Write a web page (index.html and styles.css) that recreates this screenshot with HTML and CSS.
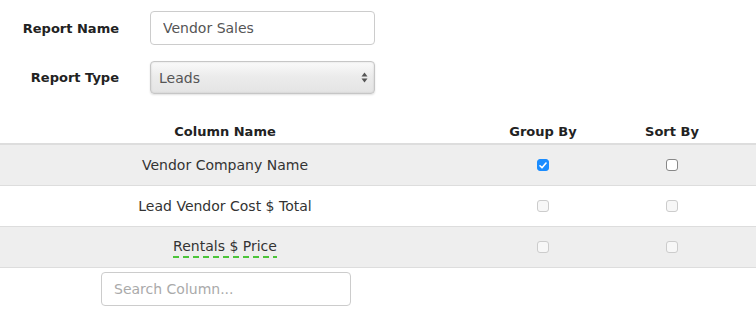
FILE: index.html
```html
<!DOCTYPE html>
<html>
<head>
<meta charset="utf-8">
<link rel="stylesheet" href="styles.css">
</head>
<body>
<div class="form">
  <div class="field">
    <label class="label">Report Name</label>
    <input class="text-input" type="text" value="Vendor Sales">
  </div>
  <div class="field">
    <label class="label">Report Type</label>
    <div class="select">
      <span>Leads</span>
      <svg class="arrows" width="7" height="11" viewBox="0 0 7 11"><path d="M3.5 0.5 L6.5 4.5 H0.5 Z M3.5 10.5 L6.5 6.5 H0.5 Z" fill="#555"/></svg>
    </div>
  </div>
</div>
<div class="table">
  <div class="row head">
    <div class="cell">Column Name</div>
    <div class="cell">Group By</div>
    <div class="cell">Sort By</div>
    <div class="cell"></div>
  </div>
  <div class="row alt">
    <div class="cell">Vendor Company Name</div>
    <div class="cell"><span class="cb checked"><svg width="8" height="7" viewBox="0 0 8 7"><path d="M1 3.8 L3 5.8 L7 1" fill="none" stroke="#fff" stroke-width="1.6" stroke-linecap="round" stroke-linejoin="round"/></svg></span></div>
    <div class="cell"><span class="cb"></span></div>
    <div class="cell"></div>
  </div>
  <div class="row">
    <div class="cell">Lead Vendor Cost $ Total</div>
    <div class="cell"><span class="cb disabled"></span></div>
    <div class="cell"><span class="cb disabled"></span></div>
    <div class="cell"></div>
  </div>
  <div class="row alt">
    <div class="cell"><span class="dashed">Rentals $ Price</span></div>
    <div class="cell"><span class="cb disabled"></span></div>
    <div class="cell"><span class="cb disabled"></span></div>
    <div class="cell"></div>
  </div>
</div>
<div class="search-wrap">
  <input class="search" type="text" placeholder="Search Column...">
</div>
</body>
</html>
```
FILE: styles.css
```css
html, body {
  margin: 0;
  padding: 0;
  background: #fff;
}
body {
  font-family: "DejaVu Sans", sans-serif;
  font-size: 14px;
  color: #333;
  width: 756px;
  height: 326px;
  overflow: hidden;
}
.form {
  padding-top: 11px;
  display: flex;
  flex-direction: column;
  gap: 16px;
}
.field {
  display: flex;
  align-items: center;
}
.label {
  width: 119px;
  text-align: right;
  font-weight: bold;
  font-size: 13px;
  color: #222;
  margin-right: 31px;
}
.text-input {
  box-sizing: border-box;
  width: 225px;
  height: 34px;
  border: 1px solid #ccc;
  border-radius: 4px;
  padding: 0 12px;
  font-family: inherit;
  font-size: 14px;
  color: #555;
  outline: none;
  margin: 0;
}
.select {
  box-sizing: border-box;
  width: 225px;
  height: 33px;
  border: 1px solid #c6c6c6;
  border-radius: 4px;
  padding: 0 6px 0 8px;
  display: flex;
  align-items: center;
  justify-content: space-between;
  background: linear-gradient(#fafafa, #ececec 45%, #e4e4e4);
  box-shadow: inset 0 0 2px rgba(0,0,0,0.15), 0 1px 2px rgba(0,0,0,0.12);
  color: #555;
}
.table {
  margin-top: 23px;
}
.row {
  display: grid;
  grid-template-columns: 450px 186px 72px 1fr;
  height: 40px;
  align-items: center;
  border-bottom: 1px solid #ddd;
}
.row.head {
  box-sizing: border-box;
  height: 28px;
  padding-top: 3px;
  border-bottom: 2px solid #ddd;
  font-weight: bold;
  font-size: 13px;
  color: #222;
}
.row.alt { background: #eee; }
.cell {
  text-align: center;
  display: flex;
  justify-content: center;
  align-items: center;
}
.dashed {
  padding-top: 2px;
  padding-bottom: 4px;
  background-image: linear-gradient(to right, #4cc43a 6px, transparent 6px);
  background-size: 10px 2px;
  background-repeat: repeat-x;
  background-position: 0 100%;
}
.cb {
  box-sizing: border-box;
  width: 12px;
  height: 12px;
  border: 1px solid #888;
  border-radius: 3px;
  background: #fff;
  display: inline-flex;
  align-items: center;
  justify-content: center;
}
.cb.checked {
  background: #1a8cff;
  border-color: #1a8cff;
}
.cb.disabled {
  border-color: #ccc;
  background: #f7f7f7;
}
.search-wrap {
  padding: 4px 0 0 101px;
}
.search {
  box-sizing: border-box;
  width: 250px;
  height: 34px;
  border: 1px solid #ccc;
  border-radius: 4px;
  padding: 0 12px;
  font-family: inherit;
  font-size: 14px;
  outline: none;
  margin: 0;
}
.search::placeholder { color: #aaa; }
```
